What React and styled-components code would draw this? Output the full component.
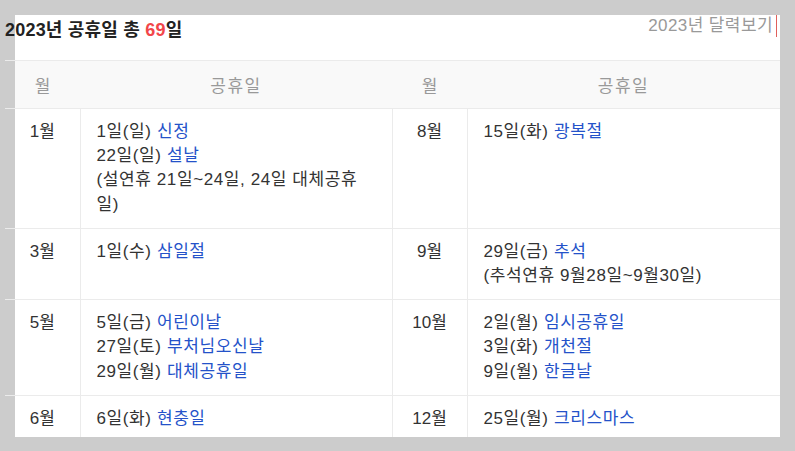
import React from "react";
import styled, { createGlobalStyle } from "styled-components";

const GlobalStyle = createGlobalStyle`
  html, body {
    margin: 0;
    padding: 0;
    background: #cccccc;
  }
  body {
    font-family: "Liberation Sans", "Noto Sans CJK KR", sans-serif;
    color: #333;
  }
`;

const Panel = styled.div`
  margin: 15px 0 0 15px;
  width: 765px;
  height: 422px;
  background: #fff;
`;

const Inner = styled.div`
  margin-left: -10px;
  width: 775px;
`;

const TopBar = styled.div`
  height: 45px;
  display: flex;
  justify-content: space-between;
  align-items: flex-start;
`;

const Title = styled.h2`
  margin: 0;
  padding-top: 5px;
  font-size: 18px;
  line-height: 20px;
  font-weight: bold;
  letter-spacing: 0.2px;
  color: #222;
`;

const Count = styled.span`
  color: #f2464a;
`;

const CalendarLink = styled.a`
  margin-right: 3px;
  padding-right: 3px;
  font-size: 17px;
  line-height: 22px;
  letter-spacing: 0.4px;
  color: #999;
  text-decoration: none;
  border-right: 1px solid #e0605c;
`;

const Table = styled.table`
  width: 775px;
  table-layout: fixed;
  border-collapse: collapse;
  font-size: 17px;
`;

const HeadRow = styled.tr`
  background: linear-gradient(90deg, transparent 10px, #f9f9f9 10px);
`;

const HeadCell = styled.th`
  height: 47px;
  padding: 0;
  font-weight: normal;
  font-size: 17px;
  letter-spacing: ${p => (p.$wide ? "1.5px" : "0")};
  color: #999;
  text-align: center;
  border-top: 1px solid #ebebeb;
  border-bottom: 1px solid #ebebeb;
`;

const Row = styled.tr`
  border-bottom: 1px solid #ebebeb;
`;

const MonthCell = styled.td`
  padding: 11px 0;
  vertical-align: top;
  text-align: center;
  line-height: 24.2px;
  border-left: ${p => (p.$divider ? "1px solid #ebebeb" : "none")};
`;

const DaysCell = styled.td`
  padding: 11px 16px;
  vertical-align: top;
  line-height: 24.2px;
  letter-spacing: 0.6px;
  border-left: 1px solid #ebebeb;
`;

const Line = styled.div``;

const Name = styled.span`
  color: #2452c9;
`;

const rows = [
  [
    { month: "1월", days: [["1일(일)", "신정"], ["22일(일)", "설날"]], note: "(설연휴 21일~24일, 24일 대체공휴일)" },
    { month: "8월", days: [["15일(화)", "광복절"]] },
  ],
  [
    { month: "3월", days: [["1일(수)", "삼일절"]] },
    { month: "9월", days: [["29일(금)", "추석"]], note: "(추석연휴 9월28일~9월30일)" },
  ],
  [
    { month: "5월", days: [["5일(금)", "어린이날"], ["27일(토)", "부처님오신날"], ["29일(월)", "대체공휴일"]] },
    { month: "10월", days: [["2일(월)", "임시공휴일"], ["3일(화)", "개천절"], ["9일(월)", "한글날"]] },
  ],
  [
    { month: "6월", days: [["6일(화)", "현충일"]] },
    { month: "12월", days: [["25일(월)", "크리스마스"]] },
  ],
];

const Cells = ({ item, divider }) => (
  <>
    <MonthCell $divider={divider}>{item.month}</MonthCell>
    <DaysCell>
      {item.days.map(([day, name]) => (
        <Line key={day}>
          {day} <Name>{name}</Name>
        </Line>
      ))}
      {item.note && <Line>{item.note}</Line>}
    </DaysCell>
  </>
);

export default function App() {
  return (
    <>
      <GlobalStyle />
      <Panel>
        <Inner>
          <TopBar>
            <Title>
              2023년 공휴일 총 <Count>69</Count>일
            </Title>
            <CalendarLink href="#">2023년 달력보기</CalendarLink>
          </TopBar>
          <Table>
            <colgroup>
              <col style={{ width: 75 }} />
              <col style={{ width: 312 }} />
              <col style={{ width: 75 }} />
              <col style={{ width: 313 }} />
            </colgroup>
            <thead>
              <HeadRow>
                <HeadCell>월</HeadCell>
                <HeadCell $wide>공휴일</HeadCell>
                <HeadCell>월</HeadCell>
                <HeadCell $wide>공휴일</HeadCell>
              </HeadRow>
            </thead>
            <tbody>
              {rows.map(([left, right]) => (
                <Row key={left.month}>
                  <Cells item={left} />
                  <Cells item={right} divider />
                </Row>
              ))}
            </tbody>
          </Table>
        </Inner>
      </Panel>
    </>
  );
}
